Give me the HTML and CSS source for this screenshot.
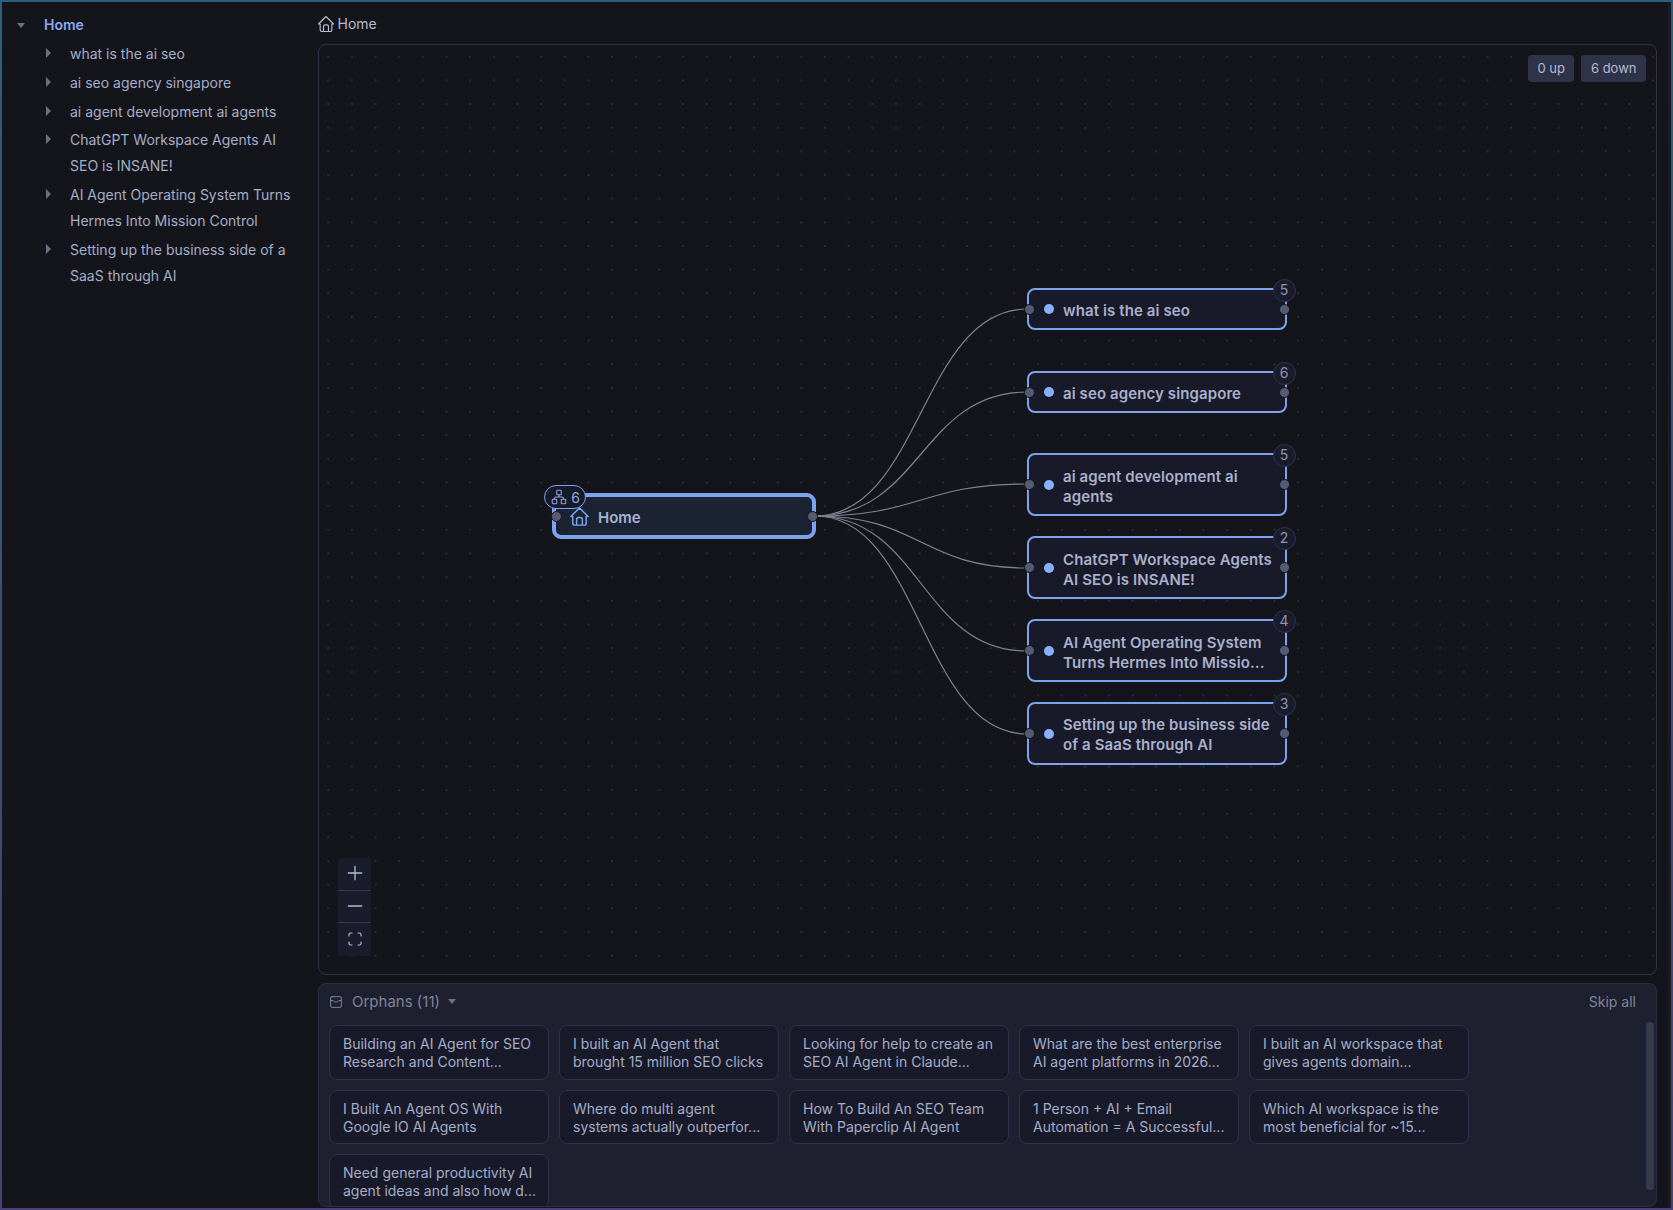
FILE: index.html
```html
<!DOCTYPE html>
<html lang="en">
<head>
    <meta charset="UTF-8">
    <title>Home</title>
    <link rel="stylesheet" href="styles.css">
</head>
<body>
    <div class="frame">
        <aside class="sidebar">
            <div class="tree-root"><span class="caret-down"></span><span>Home</span></div>
            <ul class="tree">
                <li><span class="caret-right"></span><span>what is the ai seo</span></li>
                <li><span class="caret-right"></span><span>ai seo agency singapore</span></li>
                <li><span class="caret-right"></span><span>ai agent development ai agents</span></li>
                <li><span class="caret-right"></span><span>ChatGPT Workspace Agents AI SEO is INSANE!</span></li>
                <li><span class="caret-right"></span><span>AI Agent Operating System Turns Hermes Into Mission Control</span></li>
                <li><span class="caret-right"></span><span>Setting up the business side of a SaaS through AI</span></li>
            </ul>
        </aside>

        <main class="main">
            <div class="breadcrumb">
                <svg class="icon crumb-icon" width="20" height="20" viewBox="0 0 24 24"><path d="M5 12H3l9-9 9 9h-2M5 12v7a2 2 0 0 0 2 2h10a2 2 0 0 0 2-2v-7M9 21v-6a2 2 0 0 1 2-2h2a2 2 0 0 1 2 2v6"/></svg>
                <span>Home</span>
            </div>

            <div class="canvas">
                <svg class="edges" viewBox="0 0 1337 929">
                    <path d="M496 471C602 471 602 264 708 264"/>
                    <path d="M496 471C602 471 602 347 708 347"/>
                    <path d="M496 471C602 471 602 439 708 439"/>
                    <path d="M496 471C602 471 602 523 708 523"/>
                    <path d="M496 471C602 471 602 606 708 606"/>
                    <path d="M496 471C602 471 602 689 708 689"/>
                </svg>

                <div class="root-node">
                    <span class="handle left"></span>
                    <span class="handle right"></span>
                    <span class="root-count">
                        <svg class="icon" width="18" height="18" viewBox="0 0 24 24"><rect x="3" y="15" width="6" height="6" rx="0.8"/><rect x="15" y="15" width="6" height="6" rx="0.8"/><rect x="9" y="3" width="6" height="6" rx="0.8"/><path d="M6 15v-1a2 2 0 0 1 2-2h8a2 2 0 0 1 2 2v1M12 9v3"/></svg>
                        6
                    </span>
                    <svg class="icon root-icon" width="23" height="23" viewBox="0 0 24 24"><path d="M5 12H3l9-9 9 9h-2M5 12v7a2 2 0 0 0 2 2h10a2 2 0 0 0 2-2v-7M9 21v-6a2 2 0 0 1 2-2h2a2 2 0 0 1 2 2v6"/></svg>
                    <span class="root-label">Home</span>
                </div>

                <div class="node n1"><span class="handle left"></span><span class="handle right"></span><span class="count">5</span><span class="dot"></span><span class="label">what is the ai seo</span></div>
                <div class="node n2"><span class="handle left"></span><span class="handle right"></span><span class="count">6</span><span class="dot"></span><span class="label">ai seo agency singapore</span></div>
                <div class="node n3"><span class="handle left"></span><span class="handle right"></span><span class="count">5</span><span class="dot"></span><span class="label">ai agent development ai agents</span></div>
                <div class="node n4"><span class="handle left"></span><span class="handle right"></span><span class="count">2</span><span class="dot"></span><span class="label">ChatGPT Workspace Agents AI SEO is INSANE!</span></div>
                <div class="node n5"><span class="handle left"></span><span class="handle right"></span><span class="count">4</span><span class="dot"></span><span class="label">AI Agent Operating System Turns Hermes Into Missio...</span></div>
                <div class="node n6"><span class="handle left"></span><span class="handle right"></span><span class="count">3</span><span class="dot"></span><span class="label">Setting up the business side of a SaaS through AI</span></div>

                <div class="stats">
                    <span class="stat">0 up</span>
                    <span class="stat">6 down</span>
                </div>

                <div class="zoom">
                    <button><svg class="icon" width="20" height="20" viewBox="0 0 24 24"><path d="M12 4v16M4 12h16"/></svg></button>
                    <button><svg class="icon" width="20" height="20" viewBox="0 0 24 24"><path d="M4 12h16"/></svg></button>
                    <button><svg class="icon" width="18" height="18" viewBox="0 0 24 24"><path d="M4 8V6a2 2 0 0 1 2-2h2M4 16v2a2 2 0 0 0 2 2h2M16 4h2a2 2 0 0 1 2 2v2M16 20h2a2 2 0 0 0 2-2v-2"/></svg></button>
                </div>
            </div>

            <section class="orphans">
                <div class="orphans-head">
                    <svg class="icon inbox-icon" width="16" height="16" viewBox="0 0 24 24"><rect x="4" y="4" width="16" height="16" rx="2"/><path d="M4 10h4l2 2h4l2-2h4"/></svg>
                    <span class="orphans-title">Orphans (11)</span>
                    <span class="caret-down"></span>
                    <span class="skip">Skip all</span>
                </div>
                <div class="orphan-grid">
                    <div class="orphan">Building an AI Agent for SEO Research and Content...</div>
                    <div class="orphan">I built an AI Agent that brought 15 million SEO clicks</div>
                    <div class="orphan">Looking for help to create an SEO AI Agent in Claude...</div>
                    <div class="orphan">What are the best enterprise AI agent platforms in 2026...</div>
                    <div class="orphan">I built an AI workspace that gives agents domain...</div>
                    <div class="orphan">I Built An Agent OS With Google IO AI Agents</div>
                    <div class="orphan">Where do multi agent systems actually outperfor...</div>
                    <div class="orphan">How To Build An SEO Team With Paperclip AI Agent</div>
                    <div class="orphan">1 Person + AI + Email Automation = A Successful...</div>
                    <div class="orphan">Which AI workspace is the most beneficial for ~15...</div>
                    <div class="orphan">Need general productivity AI agent ideas and also how d...</div>
                </div>
                <div class="scrollbar"></div>
            </section>
        </main>
    </div>
</body>
</html>
```
FILE: styles.css
```css
* {
    box-sizing: border-box;
}

html,
body {
    margin: 0;
    padding: 0;
    height: 100%;
    overflow: hidden;
}

body {
    font-family: Inter, "Noto Sans", sans-serif;
    font-size: 14px;
    color: #a6adc8;
    background-color: #14151b;
}

.frame {
    display: flex;
    height: 1210px;
    border: 2px solid;
    border-image: linear-gradient(#2b5f80, #4b3f7c) 1;
    background-color: #14151b;
}

.icon {
    fill: none;
    stroke: currentColor;
    stroke-width: 1.6;
    stroke-linecap: round;
    stroke-linejoin: round;
    flex-shrink: 0;
}

/* sidebar tree */
.sidebar {
    width: 316px;
    flex-shrink: 0;
    padding: 10px 20px 0 0;
    line-height: 26px;
}

.tree-root {
    display: flex;
    align-items: center;
    color: #89a9ef;
    font-weight: 600;
    padding-left: 15px;
    gap: 19px;
}

.tree {
    list-style: none;
    margin: 3px 0 0;
    padding: 0 0 0 40px;
}

.tree li {
    display: flex;
    margin-bottom: 2.75px;
}

.caret-down {
    width: 0;
    height: 0;
    border-left: 4.5px solid transparent;
    border-right: 4.5px solid transparent;
    border-top: 5px solid #6c7086;
}

.caret-right {
    width: 0;
    height: 0;
    margin: 7px 19px 0 4px;
    flex-shrink: 0;
    border-top: 5px solid transparent;
    border-bottom: 5px solid transparent;
    border-left: 5px solid #6c7086;
}

/* main column */
.main {
    flex: 1;
    min-width: 0;
    display: flex;
    flex-direction: column;
    padding-right: 11px;
    border-right: 3px solid #1b1c22;
}

.breadcrumb {
    height: 42px;
    flex-shrink: 0;
    display: flex;
    align-items: center;
    gap: 2px;
    padding-top: 1px;
    color: #b4bbd4;
}

.crumb-icon {
    margin-left: -2.5px;
    stroke-width: 1.4;
}

/* canvas */
.canvas {
    position: relative;
    height: 931px;
    flex-shrink: 0;
    border: 1px solid #2f3248;
    border-radius: 8px;
    background-color: #14151b;
    background-image: radial-gradient(circle, #2a2c37 0.8px, transparent 1px);
    background-size: 23.67px 23.67px;
    background-position: -2.6px -0.1px;
}

.edges {
    position: absolute;
    top: 0;
    left: 0;
    width: 1337px;
    height: 929px;
}

.edges path {
    fill: none;
    stroke: #7f8494;
    stroke-width: 1.2;
}

.root-node {
    position: absolute;
    left: 233px;
    top: 448px;
    width: 264px;
    height: 46px;
    display: flex;
    align-items: center;
    gap: 7px;
    padding-left: 12px;
    border: 4px solid #7ea3ee;
    border-radius: 9px;
    background-color: #1b2333;
    color: #a9b4d4;
    font-size: 15px;
    font-weight: 600;
}

.root-icon {
    color: #7ea3ee;
    stroke-width: 1.5;
}

.root-label {
    padding-top: 2px;
}

.root-count {
    position: absolute;
    left: -12px;
    top: -12px;
    width: 42px;
    height: 24px;
    display: flex;
    align-items: center;
    justify-content: center;
    gap: 3px;
    border: 1px solid #7ea3ee;
    border-radius: 12px;
    background-color: #171b29;
    color: #8fa6dd;
    font-size: 14px;
    font-weight: 400;
}

.root-count .icon {
    stroke-width: 1.4;
}

.node {
    position: absolute;
    left: 708px;
    width: 260px;
    display: flex;
    align-items: center;
    padding-left: 15px;
    border: 2px solid #7ea3ee;
    border-radius: 8px;
    background-color: #181a29;
    color: #a9b0cc;
    font-size: 15px;
    font-weight: 600;
    line-height: 20px;
    letter-spacing: 0.1px;
}

.n1 { top: 243px; height: 42px; }
.n2 { top: 326px; height: 42px; }
.n3 { top: 408px; height: 63px; }
.n4 { top: 491px; height: 63px; }
.n5 { top: 574px; height: 63px; }
.n6 { top: 657px; height: 63px; }

.dot {
    width: 10px;
    height: 10px;
    margin-right: 9px;
    flex-shrink: 0;
    border-radius: 50%;
    background-color: #89b0fa;
}

.label {
    width: 216px;
    padding-top: 4px;
}

.n6 .label {
    padding-top: 2px;
}

.handle {
    position: absolute;
    top: 50%;
    width: 11px;
    height: 11px;
    margin-top: -5.5px;
    border: 1px solid #14151b;
    border-radius: 50%;
    background-color: #575b72;
}

.handle.left {
    left: -5.5px;
}

.handle.right {
    right: -4.5px;
}

.root-node .handle.right {
    right: -5.5px;
}

.count {
    position: absolute;
    right: -10.5px;
    top: -11.5px;
    width: 23px;
    height: 23px;
    display: flex;
    align-items: center;
    justify-content: center;
    border: 1px solid #2f3350;
    border-radius: 50%;
    background-color: #1a1b2b;
    color: #8f94ab;
    font-size: 14px;
    font-weight: 400;
    letter-spacing: 0;
}

.stats {
    position: absolute;
    top: 10px;
    right: 10px;
    display: flex;
    gap: 7px;
}

.stat {
    height: 27px;
    padding: 0 9.5px 1px;
    display: flex;
    align-items: center;
    border-radius: 4px;
    background-color: #2f3348;
    color: #b4bbd4;
    font-size: 13px;
}

.zoom {
    position: absolute;
    left: 19px;
    top: 813px;
    width: 33px;
    display: flex;
    flex-direction: column;
    background-color: #1a1b2b;
}

.zoom button {
    height: 32.67px;
    padding: 0 0 1px;
    display: flex;
    align-items: center;
    justify-content: center;
    border: 0;
    border-bottom: 1px solid #34374d;
    background: transparent;
    color: #b4bbd4;
}

.zoom button:last-child {
    border-bottom: 0;
}

/* orphans panel */
.orphans {
    position: relative;
    height: 224px;
    margin-top: 8px;
    flex-shrink: 0;
    padding: 0 10px;
    overflow: hidden;
    border: 1px solid #2b2e42;
    border-radius: 8px;
    background-color: #1e2030;
}

.orphans-head {
    height: 35px;
    margin-bottom: 6px;
    display: flex;
    align-items: center;
    color: #7f849c;
}

.inbox-icon {
    margin-left: -1px;
    stroke-width: 1.5;
}

.orphans-title {
    margin-left: 8px;
    margin-right: 8px;
    font-size: 15px;
}

.skip {
    margin-left: auto;
    margin-right: 10px;
}

.orphan-grid {
    display: grid;
    grid-template-columns: repeat(5, 220px);
    grid-auto-rows: 54.5px;
    gap: 10px;
}

.orphan {
    padding: 9px 8px 0 13px;
    border: 1px solid #2f3248;
    border-radius: 8px;
    background-color: #181a29;
    color: #a6adc8;
    line-height: 18px;
}

.scrollbar {
    position: absolute;
    right: 2px;
    top: 38px;
    width: 8px;
    height: 168px;
    border-radius: 4px;
    background-color: #363a4f;
}
```
